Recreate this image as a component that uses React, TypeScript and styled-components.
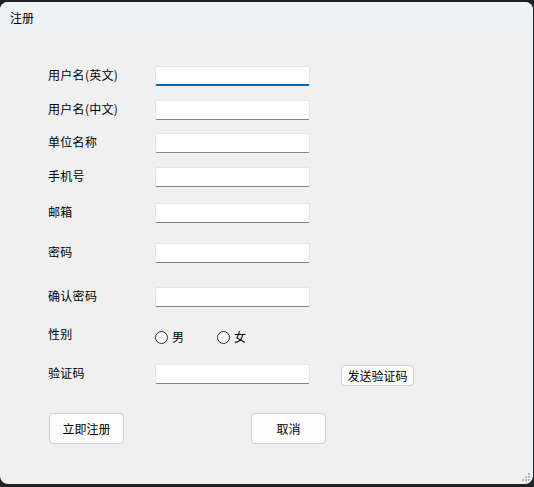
import styled, { createGlobalStyle } from 'styled-components';

const GlobalStyle = createGlobalStyle`
  html, body {
    margin: 0;
    padding: 0;
    background: #1d2228;
  }
  body {
    font-family: "Noto Sans CJK SC", "Noto Sans", "Liberation Sans", sans-serif;
    font-size: 12px;
    color: #000;
  }
`;

const Window = styled.div`
  width: 533px;
  height: 482px;
  margin-top: 2px;
  background: #f0f0f0;
  border-radius: 8px;
  overflow: hidden;
  display: flex;
  flex-direction: column;
  position: relative;
`;

const TitleBar = styled.div`
  height: 31px;
  background: #eef2f7;
  display: flex;
  align-items: center;
  padding-left: 10px;
  font-size: 12px;
`;

const Body = styled.div`
  flex: 1;
  padding: 33px 0 0 48px;
  display: flex;
  flex-direction: column;
`;

const Row = styled.div<{ $top: number }>`
  display: flex;
  align-items: flex-start;
  margin-top: ${(p) => p.$top}px;
`;

const Label = styled.div`
  width: 107px;
  line-height: 18px;
  flex-shrink: 0;
  letter-spacing: 0.3px;
`;

const Field = styled.input<{ $focus?: boolean }>`
  box-sizing: border-box;
  width: 155px;
  height: 20px;
  margin: 0;
  padding: 0 4px;
  background: #fff;
  border: 1px solid #e6e6e6;
  border-bottom: ${(p) => (p.$focus ? '2px solid #0067c0' : '1px solid #868686')};
  border-radius: 2px;
  outline: none;
  font-family: inherit;
  font-size: 12px;
`;

const RadioGroup = styled.div`
  display: flex;
  align-items: center;
  height: 24px;
  gap: 33px;
`;

const RadioOption = styled.label`
  display: flex;
  align-items: center;
  gap: 4px;
  line-height: 18px;
`;

const Circle = styled.span`
  box-sizing: border-box;
  width: 13px;
  height: 13px;
  border-radius: 50%;
  border: 1px solid #333;
  background: #f8f8f8;
`;

const SmallButton = styled.button`
  box-sizing: border-box;
  margin-left: 31px;
  margin-top: 1px;
  width: 73px;
  height: 21px;
  padding: 0;
  background: #fdfdfd;
  border: 1px solid #d0d0d0;
  border-radius: 4px;
  font-family: inherit;
  font-size: 12px;
  line-height: 18px;
  color: #000;
`;

const Actions = styled.div`
  display: flex;
  margin-top: 27px;
  margin-left: 1px;
  gap: 127px;
`;

const Button = styled.button`
  box-sizing: border-box;
  width: 75px;
  height: 31px;
  background: #fdfdfd;
  border: 1px solid #d0d0d0;
  border-radius: 4px;
  font-family: inherit;
  font-size: 12px;
  color: #000;
`;

const Grip = styled.svg`
  position: absolute;
  right: 2px;
  bottom: 2px;
`;

const fields = [
  { label: '用户名(英文)', top: 0, focus: true },
  { label: '用户名(中文)', top: 14 },
  { label: '单位名称', top: 13 },
  { label: '手机号', top: 14 },
  { label: '邮箱', top: 16 },
  { label: '密码', top: 20 },
  { label: '确认密码', top: 24 },
];

export default function App() {
  return (
    <>
      <GlobalStyle />
      <Window>
        <TitleBar>注册</TitleBar>
        <Body>
          {fields.map((f) => (
            <Row key={f.label} $top={f.top}>
              <Label>{f.label}</Label>
              <Field $focus={f.focus} />
            </Row>
          ))}
          <Row $top={18}>
            <Label>性别</Label>
            <RadioGroup>
              <RadioOption>
                <Circle />男
              </RadioOption>
              <RadioOption>
                <Circle />女
              </RadioOption>
            </RadioGroup>
          </Row>
          <Row $top={15}>
            <Label>验证码</Label>
            <Field />
            <SmallButton>发送验证码</SmallButton>
          </Row>
          <Actions>
            <Button>立即注册</Button>
            <Button>取消</Button>
          </Actions>
        </Body>
        <Grip width="10" height="10" viewBox="0 0 10 10">
          <g fill="#b8b8b8">
            <rect x="7" y="1" width="2" height="2" />
            <rect x="4" y="4" width="2" height="2" />
            <rect x="7" y="4" width="2" height="2" />
            <rect x="1" y="7" width="2" height="2" />
            <rect x="4" y="7" width="2" height="2" />
            <rect x="7" y="7" width="2" height="2" />
          </g>
        </Grip>
      </Window>
    </>
  );
}
